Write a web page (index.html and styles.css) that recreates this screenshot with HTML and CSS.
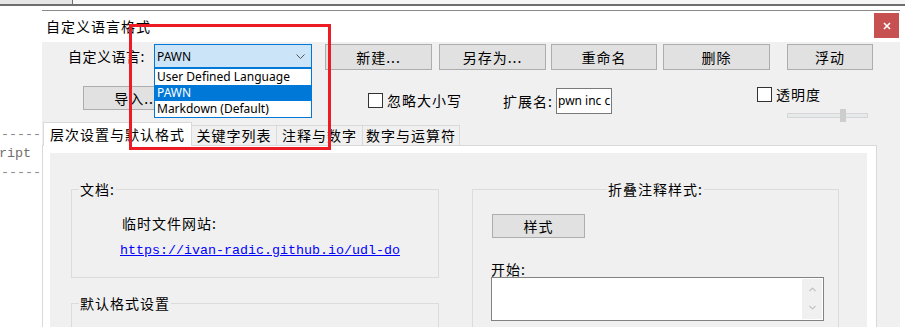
FILE: index.html
```html
<!DOCTYPE html>
<html lang="zh-CN">
<head>
<meta charset="utf-8">
<title>自定义语言格式</title>
<link rel="stylesheet" href="styles.css">
</head>
<body>
<div class="screen">
  <div class="topstrip"><div class="ts-left"></div><div class="ts-right"></div></div>
  <div class="main">
    <div class="code">
      <div class="cl">-----</div>
      <div class="cl cl-r">ript</div>
      <div class="cl">-----</div>
    </div>
    <div class="dialog">
      <div class="titlebar">
        <span class="title">自定义语言格式</span>
        <span class="close"><svg width="8" height="8" viewBox="0 0 8 8"><path d="M1 1L7 7M7 1L1 7" stroke="#fff" stroke-width="1.6" fill="none"/></svg></span>
      </div>
      <div class="body">
        <div class="row1">
          <span class="lbl1">自定义语言:</span>
          <div class="combo">
            <span class="combo-text">PAWN</span>
            <svg class="chev" width="9" height="5" viewBox="0 0 9 5"><path d="M0.5 0.5L4.5 4.5L8.5 0.5" stroke="#555" stroke-width="1" fill="none"/></svg>
            <ul class="dropdown">
              <li>User Defined Language</li>
              <li class="sel">PAWN</li>
              <li>Markdown (Default)</li>
            </ul>
          </div>
          <button class="btn b-new">新建...</button>
          <button class="btn b-saveas">另存为...</button>
          <button class="btn b-rename">重命名</button>
          <button class="btn b-del">删除</button>
          <button class="btn b-float">浮动</button>
        </div>
        <div class="row2">
          <button class="btn b-import">导入...</button>
          <label class="chk chk-case"><span class="box"></span><span>忽略大小写</span></label>
          <span class="ext-lbl">扩展名:</span>
          <div class="ext-input">pwn inc c</div>
          <div class="transp">
            <label class="chk"><span class="box"></span><span>透明度</span></label>
            <div class="slider"><div class="track"></div><div class="thumb"></div></div>
          </div>
        </div>
        <div class="tabs">
          <div class="tab active t1">层次设置与默认格式</div>
          <div class="tab t2">关键字列表</div>
          <div class="tab t3">注释与数字</div>
          <div class="tab t4">数字与运算符</div>
        </div>
        <div class="tabpage">
          <div class="panel">
            <div class="leftcol">
              <fieldset class="grp grp-doc">
                <legend>文档:</legend>
                <div class="doc-lbl">临时文件网站:</div>
                <a class="doc-link" href="#">https://ivan-radic.github.io/udl-do</a>
              </fieldset>
              <fieldset class="grp grp-def">
                <legend>默认格式设置</legend>
              </fieldset>
            </div>
            <fieldset class="grp grp-fold">
              <legend>折叠注释样式:</legend>
              <button class="btn b-style">样式</button>
              <div class="start-lbl">开始:</div>
              <div class="textbox">
                <div class="vscroll">
                  <svg width="7" height="5" viewBox="0 0 7 5"><path d="M0.5 4L3.5 1L6.5 4" stroke="#c4c4c4" stroke-width="1.2" fill="none"/></svg>
                  <svg width="7" height="5" viewBox="0 0 7 5"><path d="M0.5 1L3.5 4L6.5 1" stroke="#c4c4c4" stroke-width="1.2" fill="none"/></svg>
                </div>
              </div>
            </fieldset>
          </div>
        </div>
      </div>
    </div>
  </div>
  <div class="annot"></div>
</div>
</body>
</html>
```
FILE: styles.css
```css
* { box-sizing: border-box; }
html, body { margin: 0; padding: 0; }
body {
  width: 905px; height: 327px; overflow: hidden; background: #fff;
  font-family: "Noto Sans CJK SC", "Noto Sans", sans-serif;
  font-size: 14px; color: #000; letter-spacing: 1px;
}
.screen { position: relative; width: 905px; height: 327px; overflow: hidden; display: flex; flex-direction: column; }

.topstrip { display: flex; height: 6px; flex: none; border-bottom: 2px solid #6e6e6e; }
.ts-left { width: 73px; background: #e6e6e6; border-right: 1px solid #707070; }
.ts-right { flex: 1; background: #f6f6f6; }

.main { display: flex; flex: 1; min-height: 0; }
.code {
  width: 42px; flex: none; padding-top: 119px; padding-left: 1px;
  font-family: "Liberation Mono", monospace; font-size: 13.33px; line-height: 19px;
  color: #8a8a8a; overflow: hidden; letter-spacing: 0;
}
.cl { white-space: pre; height: 19px; }
.cl-r { margin-left: -2px; color: #707070; }

.dialog { width: 858px; flex: none; margin-top: 4px; border-top: 1px solid #8a8a8a; display: flex; flex-direction: column; }
.titlebar { height: 31px; flex: none; background: #fff; display: flex; align-items: flex-start; justify-content: space-between; }
.title { line-height: 31px; padding-left: 4px; }
.close {
  width: 25px; height: 25px; margin-top: 2px; margin-right: 1px;
  background: #c75050; display: flex; align-items: center; justify-content: center;
}
.body { flex: 1; background: #f0f0f0; padding-top: 2px; display: flex; flex-direction: column; min-height: 0; }

.btn {
  font-family: inherit; font-size: 14px; letter-spacing: 1px; color: #000; padding: 0;
  background: #e1e1e1; border: 1px solid #adadad; border-radius: 0;
  height: 26px; line-height: 22px; flex: none;
}

.row1 { display: flex; align-items: flex-start; height: 26px; flex: none; }
.lbl1 { margin-left: 26px; width: 86px; line-height: 24px; flex: none; letter-spacing: 0.5px; }
.combo {
  position: relative; width: 158px; height: 24px; flex: none;
  background: #cce4f7; border: 1px solid #0078d7;
  display: flex; align-items: center; justify-content: space-between;
  padding: 0 6px 0 2px;
}
.combo-text, .dropdown, .ext-input { font-family: "Noto Sans", "Liberation Sans", sans-serif; font-size: 12px; letter-spacing: 0; }
.chev { margin-top: 1px; }
.dropdown {
  position: absolute; left: -1px; top: 23px; width: 158px; z-index: 5;
  margin: 0; padding: 0; list-style: none; background: #fff; border: 1px solid #0078d7;
}
.dropdown li { height: 16px; line-height: 16px; padding-left: 2px; white-space: nowrap; }
.dropdown li.sel { background: #0078d7; color: #fff; }

.b-new { margin-left: 13px; width: 107px; }
.b-saveas { margin-left: 7px; width: 107px; }
.b-rename { margin-left: 5px; width: 106px; }
.b-del { margin-left: 6px; width: 107px; }
.b-float { margin-left: 17px; width: 86px; }

.row2 { display: flex; align-items: flex-start; height: 36px; margin-top: 16px; flex: none; }
.b-import { margin-left: 41px; width: 107px; height: 24px; }
.chk { display: flex; align-items: center; line-height: 15px; white-space: nowrap; }
.box { width: 15px; height: 15px; border: 1px solid #333; background: #fff; margin-right: 4px; flex: none; }
.chk-case { margin-left: 178px; margin-top: 7px; width: 135px; flex: none; }
.ext-lbl { width: 53px; flex: none; margin-top: 2px; line-height: 26px; }
.ext-input {
  width: 56px; height: 26px; flex: none; margin-top: 2px; overflow: hidden; white-space: nowrap;
  background: #fff; border: 1px solid #7a7a7a; line-height: 24px; padding-left: 1px;
}
.transp { margin-left: 145px; margin-top: 1px; flex: none; display: flex; flex-direction: column; }
.slider { position: relative; margin-left: 30px; margin-top: 7px; width: 81px; height: 13px; display: flex; align-items: center; }
.track { width: 81px; height: 5px; background: #e7eaea; border: 1px solid #d6d6d6; }
.thumb { position: absolute; left: 53px; top: 0; width: 6px; height: 13px; background: #cdcdcd; }

.tabs { display: flex; align-items: flex-end; height: 23px; margin-left: 1px; flex: none; position: relative; z-index: 2; }
.tab {
  height: 20px; line-height: 19px; text-align: center; white-space: nowrap;
  border: 1px solid #d9d9d9; border-bottom: none; background: #f0f0f0; flex: none;
}
.tab + .tab { border-left: none; }
.tab.active { height: 24px; margin-bottom: -1px; background: #fff; line-height: 22px; }
.t1 { width: 149px; }
.t2 { width: 85px; }
.t3 { width: 86px; }
.t4 { width: 97px; }

.tabpage {
  width: 835px; flex: 1; min-height: 0;
  background: #fff; border: 1px solid #d9d9d9; border-bottom: none;
  padding: 7px 9px 0 7px;
}
.panel { height: 200px; background: #f0f0f0; display: flex; align-items: flex-start; padding: 28px 0 0 21px; }
.leftcol { width: 368px; flex: none; display: flex; flex-direction: column; }

.grp { margin: 0; padding: 0; min-width: 0; border: 1px solid #dcdcdc; }
.grp legend { padding: 0 1px; margin-left: 7px; line-height: 16px; font-size: 14px; }
.grp-doc { height: 97px; }
.doc-lbl { margin-top: 16px; margin-left: 50px; line-height: 20px; }
.doc-link {
  display: block; margin-top: 8px; margin-left: 48px; line-height: 20px; letter-spacing: 0;
  font-family: "Liberation Mono", monospace; font-size: 13.33px; color: #0000ff; text-decoration: underline;
  white-space: nowrap;
}
.grp-def { margin-top: 17px; height: 80px; }

.grp-fold { width: 367px; margin-left: 33px; height: 180px; flex: none; }
.grp-fold legend { margin-left: auto; margin-right: auto; }
.b-style { display: block; margin-left: 19px; margin-top: 17px; width: 93px; height: 24px; }
.start-lbl { margin-left: 18px; margin-top: 23px; line-height: 16px; }
.textbox {
  margin-left: 18px; width: 333px; height: 44px; background: #fff; border: 1px solid #828282;
  display: flex; justify-content: flex-end; padding: 1px;
}
.vscroll { width: 20px; background: #f0f0f0; display: flex; flex-direction: column; align-items: center; justify-content: space-between; padding: 8px 0 9px; }

.annot {
  position: absolute; left: 129px; top: 24px; width: 202px; height: 126px;
  border: 3px solid #ed1c24; z-index: 10; pointer-events: none;
}
```
